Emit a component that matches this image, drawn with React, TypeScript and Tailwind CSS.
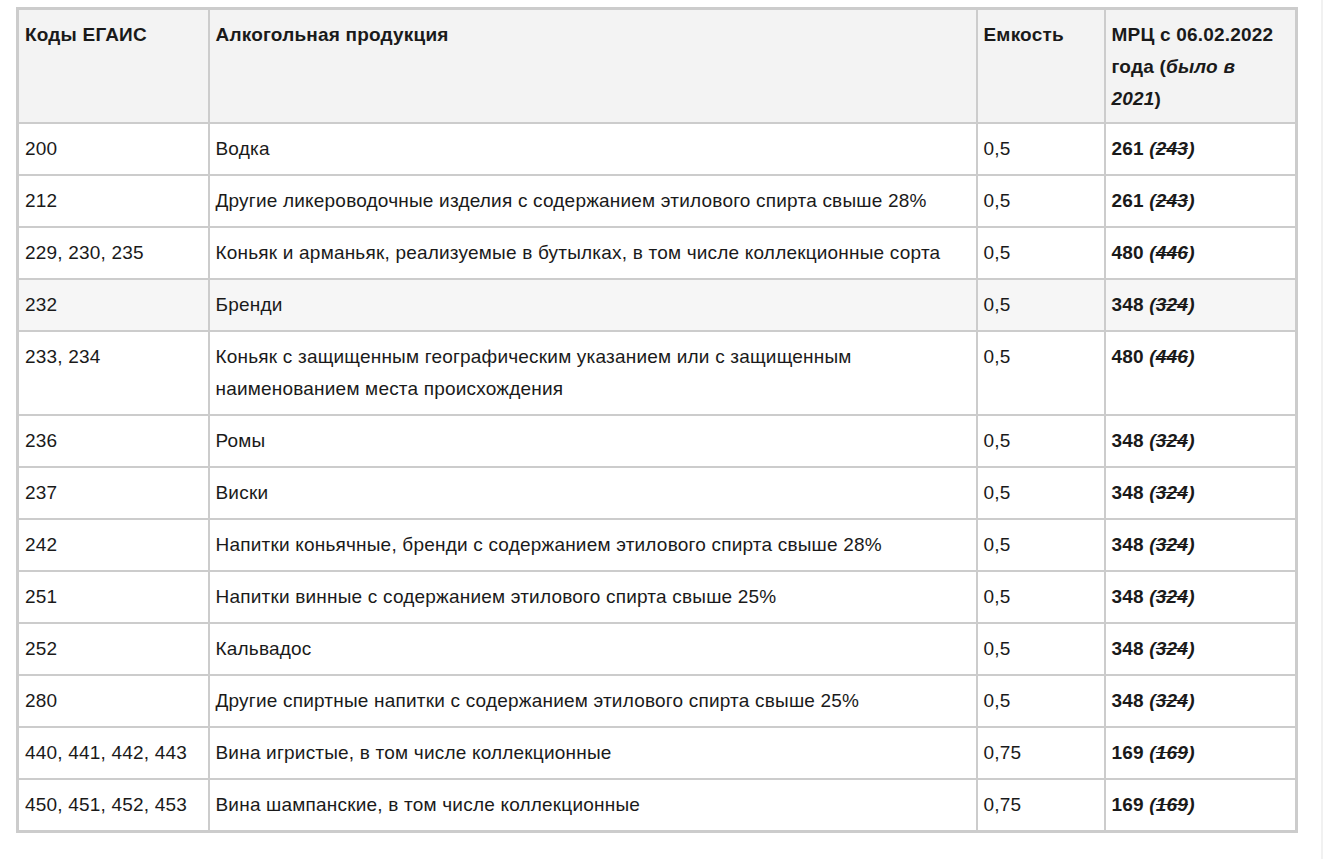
import React from 'react';

type Row = {
  codes: string;
  name: string;
  volume: string;
  price: string;
  old: string;
  hover?: boolean;
};

const rows: Row[] = [
  { codes: '200', name: 'Водка', volume: '0,5', price: '261', old: '243' },
  { codes: '212', name: 'Другие ликероводочные изделия с содержанием этилового спирта свыше 28%', volume: '0,5', price: '261', old: '243' },
  { codes: '229, 230, 235', name: 'Коньяк и арманьяк, реализуемые в бутылках, в том числе коллекционные сорта', volume: '0,5', price: '480', old: '446' },
  { codes: '232', name: 'Бренди', volume: '0,5', price: '348', old: '324', hover: true },
  { codes: '233, 234', name: 'Коньяк с защищенным географическим указанием или с защищенным наименованием места происхождения', volume: '0,5', price: '480', old: '446' },
  { codes: '236', name: 'Ромы', volume: '0,5', price: '348', old: '324' },
  { codes: '237', name: 'Виски', volume: '0,5', price: '348', old: '324' },
  { codes: '242', name: 'Напитки коньячные, бренди с содержанием этилового спирта свыше 28%', volume: '0,5', price: '348', old: '324' },
  { codes: '251', name: 'Напитки винные с содержанием этилового спирта свыше 25%', volume: '0,5', price: '348', old: '324' },
  { codes: '252', name: 'Кальвадос', volume: '0,5', price: '348', old: '324' },
  { codes: '280', name: 'Другие спиртные напитки с содержанием этилового спирта свыше 25%', volume: '0,5', price: '348', old: '324' },
  { codes: '440, 441, 442, 443', name: 'Вина игристые, в том числе коллекционные', volume: '0,75', price: '169', old: '169' },
  { codes: '450, 451, 452, 453', name: 'Вина шампанские, в том числе коллекционные', volume: '0,75', price: '169', old: '169' },
];

const cell = 'border-2 border-[#cccccc] px-[6px] pt-[9px] pb-[9px] align-top text-left';
const head = 'border-2 border-[#cccccc] px-[6px] pt-[9px] pb-[7px] align-top text-left';

const App: React.FC = () => {
  return (
    <div className="flex min-h-[859px] bg-white font-['Liberation_Sans',Arial,sans-serif] text-[19px] leading-[32px] tracking-[0.2px] text-[#1a1a1a]">
      <div className="w-[1321px] pl-[16px] pt-[7px]">
        <table className="w-[1282px] table-fixed border-collapse border-[3px] border-[#cccccc]">
          <colgroup>
            <col className="w-[191px]" />
            <col className="w-[768px]" />
            <col className="w-[128px]" />
            <col />
          </colgroup>
          <thead>
            <tr className="bg-[#f3f3f3] font-bold">
              <th className={head}>Коды ЕГАИС</th>
              <th className={head}>Алкогольная продукция</th>
              <th className={head}>Емкость</th>
              <th className={head}>
                <div className="max-w-[168px]">
                  МРЦ с 06.02.2022 года (<em>было в 2021</em>)
                </div>
              </th>
            </tr>
          </thead>
          <tbody>
            {rows.map((r) => (
              <tr key={r.codes} className={r.hover ? 'bg-[#f6f6f6]' : 'bg-white'}>
                <td className={cell}>{r.codes}</td>
                <td className={cell}>{r.name}</td>
                <td className={cell}>{r.volume}</td>
                <td className={cell}>
                  <strong>
                    {r.price} <em>(<s>{r.old}</s>)</em>
                  </strong>
                </td>
              </tr>
            ))}
          </tbody>
        </table>
      </div>
      <div className="w-[2px] bg-[#f1f1f1]" />
    </div>
  );
};

export default App;
